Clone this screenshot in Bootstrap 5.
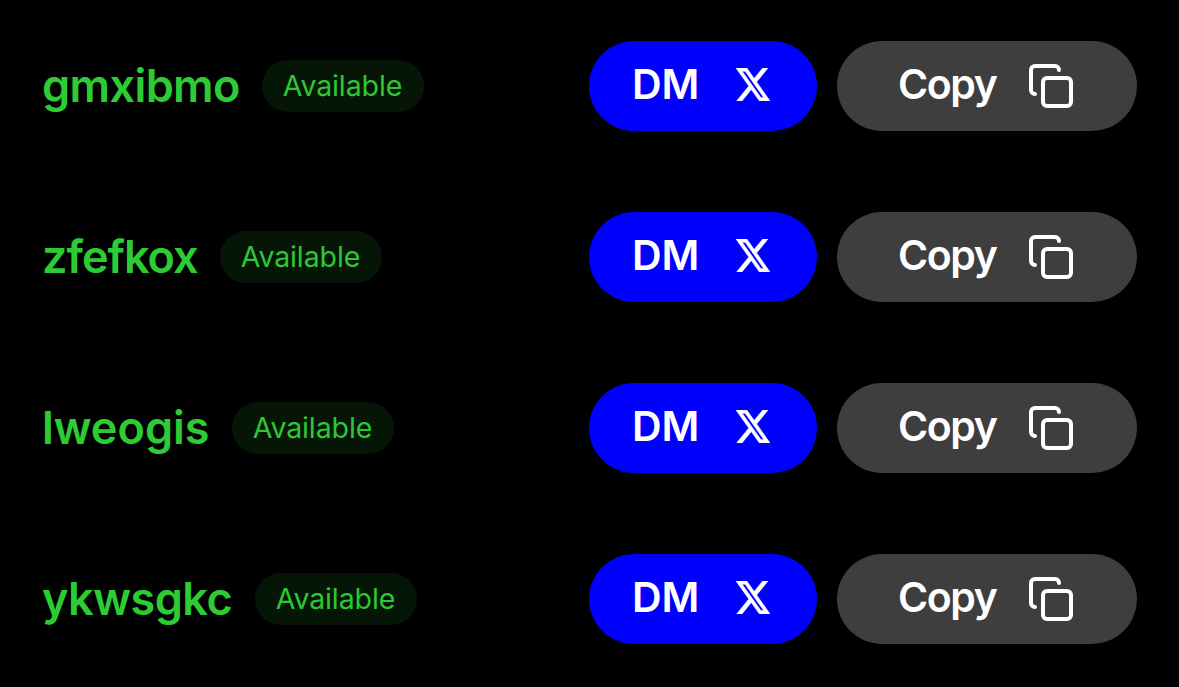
<!DOCTYPE html>
<html lang="en">

<head>
    <meta charset="UTF-8">
    <title>Invite codes</title>
    <meta name="viewport" content="width=device-width, initial-scale=1">
    <link href="https://cdn.jsdelivr.net/npm/bootstrap@5.3.0/dist/css/bootstrap.min.css" rel="stylesheet">
    <style>
        body {
            background-color: #000;
            font-family: Inter, "Liberation Sans", sans-serif;
            overflow: hidden;
        }

        .code-list {
            padding: 41px 42px 0;
            gap: 81px;
        }

        .code-row {
            height: 90px;
        }

        .code-name {
            padding-bottom: 2px;
            color: #2dcc34;
            font-size: 45px;
            font-weight: 600;
            line-height: 1;
            white-space: nowrap;
        }

        .code-status {
            width: 162px;
            height: 52px;
            padding-right: 1px;
            color: #2dc734;
            background-color: #051606;
            font-size: 28.5px;
            letter-spacing: -.1px;
            line-height: 1;
        }

        .code-actions {
            gap: 20px;
        }

        .btn-code {
            height: 90px;
            padding: 0;
            border: 0;
            color: #fff;
            font-size: 41px;
            font-weight: 600;
            line-height: 1;
        }

        .btn-dm {
            width: 228px;
            padding: 0 47px 4px 43px;
            background-color: #00f;
        }

        .btn-copy {
            width: 300px;
            padding: 0 62px 0 61px;
            background-color: #3e3e3e;
        }

        .copy-label {
            padding-bottom: 4px;
            letter-spacing: -1.4px;
        }
    </style>
</head>

<body>
    <svg class="d-none">
        <symbol id="icon-x" viewBox="1.25 2.25 21.58 19.5" preserveAspectRatio="none">
            <path fill="currentColor" stroke="currentColor" stroke-width=".4" d="M18.244 2.25h3.308l-7.227 8.26 8.502 11.24H16.17l-5.214-6.817L4.99 21.75H1.68l7.73-8.835L1.254 2.25H8.08l4.713 6.231zm-1.161 17.52h1.833L7.084 4.126H5.117z" />
        </symbol>
        <symbol id="icon-copy" viewBox="0 0 24 24">
            <g fill="none" stroke="currentColor" stroke-width="2" stroke-linecap="round" stroke-linejoin="round">
                <rect x="8" y="8" width="14" height="14" rx="2" />
                <path d="M4 16c-1.1 0-2-.9-2-2V4c0-1.1.9-2 2-2h10c1.1 0 2 .9 2 2" />
            </g>
        </symbol>
    </svg>

    <main class="code-list d-flex flex-column" id="code-list"></main>

    <script src="https://cdn.jsdelivr.net/npm/bootstrap@5.3.0/dist/js/bootstrap.bundle.min.js"></script>
    <script>
        const codes = [
            { name: 'gmxibmo', width: 220, spacing: -0.6 },
            { name: 'zfefkox', width: 178, spacing: -1 },
            { name: 'lweogis', width: 190, spacing: 0 },
            { name: 'ykwsgkc', width: 213, spacing: -0.5 }
        ];

        document.getElementById('code-list').innerHTML = codes.map(code => `
            <div class="code-row d-flex align-items-center">
                <div class="code-name" style="width: ${code.width}px; letter-spacing: ${code.spacing}px">${code.name}</div>
                <span class="code-status rounded-pill d-flex align-items-center justify-content-center">Available</span>
                <div class="code-actions d-flex ms-auto">
                    <button type="button" class="btn btn-code btn-dm rounded-pill d-flex align-items-center justify-content-between">
                        <span>DM</span>
                        <svg width="34" height="33"><use href="#icon-x" /></svg>
                    </button>
                    <button type="button" class="btn btn-code btn-copy rounded-pill d-flex align-items-center justify-content-between">
                        <span class="copy-label">Copy</span>
                        <svg width="48" height="48"><use href="#icon-copy" /></svg>
                    </button>
                </div>
            </div>`).join('');
    </script>
</body>

</html>
